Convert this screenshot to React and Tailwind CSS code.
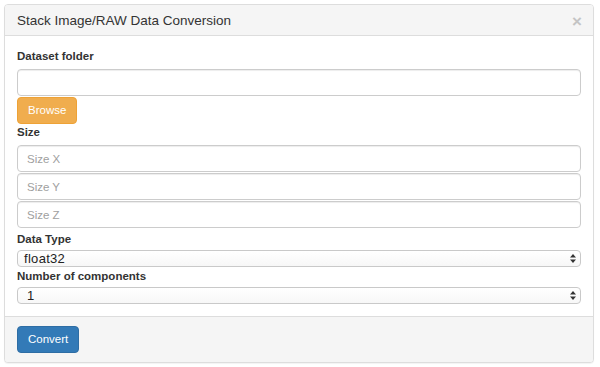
export default function App() {
  const sizes = ["Size X", "Size Y", "Size Z"];

  return (
    <div className="p-1 bg-white min-h-[367px] text-[#333]" style={{ fontFamily: '"Liberation Sans", Arial, sans-serif' }}>
      <div className="w-[590px] border border-[#ddd] rounded-[4px] bg-white overflow-hidden shadow-[0_1px_1px_rgba(0,0,0,0.05)]">
        {/* header */}
        <div className="h-[31px] bg-[#f5f5f5] border-b border-[#ddd] pl-3 pr-[11px] flex items-center justify-between">
          <div className="text-[13.5px] leading-none pt-[2px]">Stack Image/RAW Data Conversion</div>
          <div className="text-[17px] font-bold text-[#c4c4c4] leading-none pt-[3px]">×</div>
        </div>

        {/* body */}
        <div className="px-3 pt-[13px] pb-3 border-b border-[#ddd]">
          <Label>Dataset folder</Label>
          <input
            className="mt-[5px] block w-full h-[27px] border border-[#ccc] rounded-[4px] px-[10px] text-[11.5px] shadow-[inset_0_1px_1px_rgba(0,0,0,0.075)] outline-none"
            readOnly
          />
          <button className="mt-px h-[27px] px-[10px] rounded-[4px] bg-[#f0ad4e] border border-[#eea236] text-white text-[11.5px]">
            Browse
          </button>

          <div className="mt-px">
            <Label>Size</Label>
          </div>
          <div className="mt-[5px] flex flex-col gap-px">
            {sizes.map((s) => (
              <input
                key={s}
                placeholder={s}
                readOnly
                className="block w-full h-[27px] border border-[#ccc] rounded-[4px] px-[9px] text-[11.5px] placeholder:text-[#a0a0a0] shadow-[inset_0_1px_1px_rgba(0,0,0,0.075)] outline-none"
              />
            ))}
          </div>

          <div className="mt-1">
            <Label>Data Type</Label>
          </div>
          <Select value="float32" />

          <div className="mt-[2px]">
            <Label>Number of components</Label>
          </div>
          <Select value="1" pad="pl-[9px]" />
        </div>

        {/* footer */}
        <div className="bg-[#f5f5f5] px-3 pt-[9px] pb-[9px]">
          <button className="h-[27px] px-[10px] rounded-[4px] bg-[#337ab7] border border-[#2e6da4] text-white text-[11.5px]">
            Convert
          </button>
        </div>
      </div>
    </div>
  );
}

function Label({ children }) {
  return <div className="text-[11.5px] leading-[15px] font-bold text-[#333]">{children}</div>;
}

function Select({ value, pad = "pl-[6px]" }) {
  return (
    <div className={"mt-[3px] h-[17px] border border-[#c9c9c9] rounded-[4px] bg-gradient-to-b from-white to-[#f7f7f7] flex items-center justify-between pr-[4px] " + pad}>
      <span className="text-[13px] tracking-[0.3px] leading-none text-[#222]">{value}</span>
      <svg width="6" height="9" viewBox="0 0 6 9">
        <path d="M3 0 L6 3.5 L0 3.5 Z" fill="#333" />
        <path d="M0 5.5 L6 5.5 L3 9 Z" fill="#333" />
      </svg>
    </div>
  );
}
